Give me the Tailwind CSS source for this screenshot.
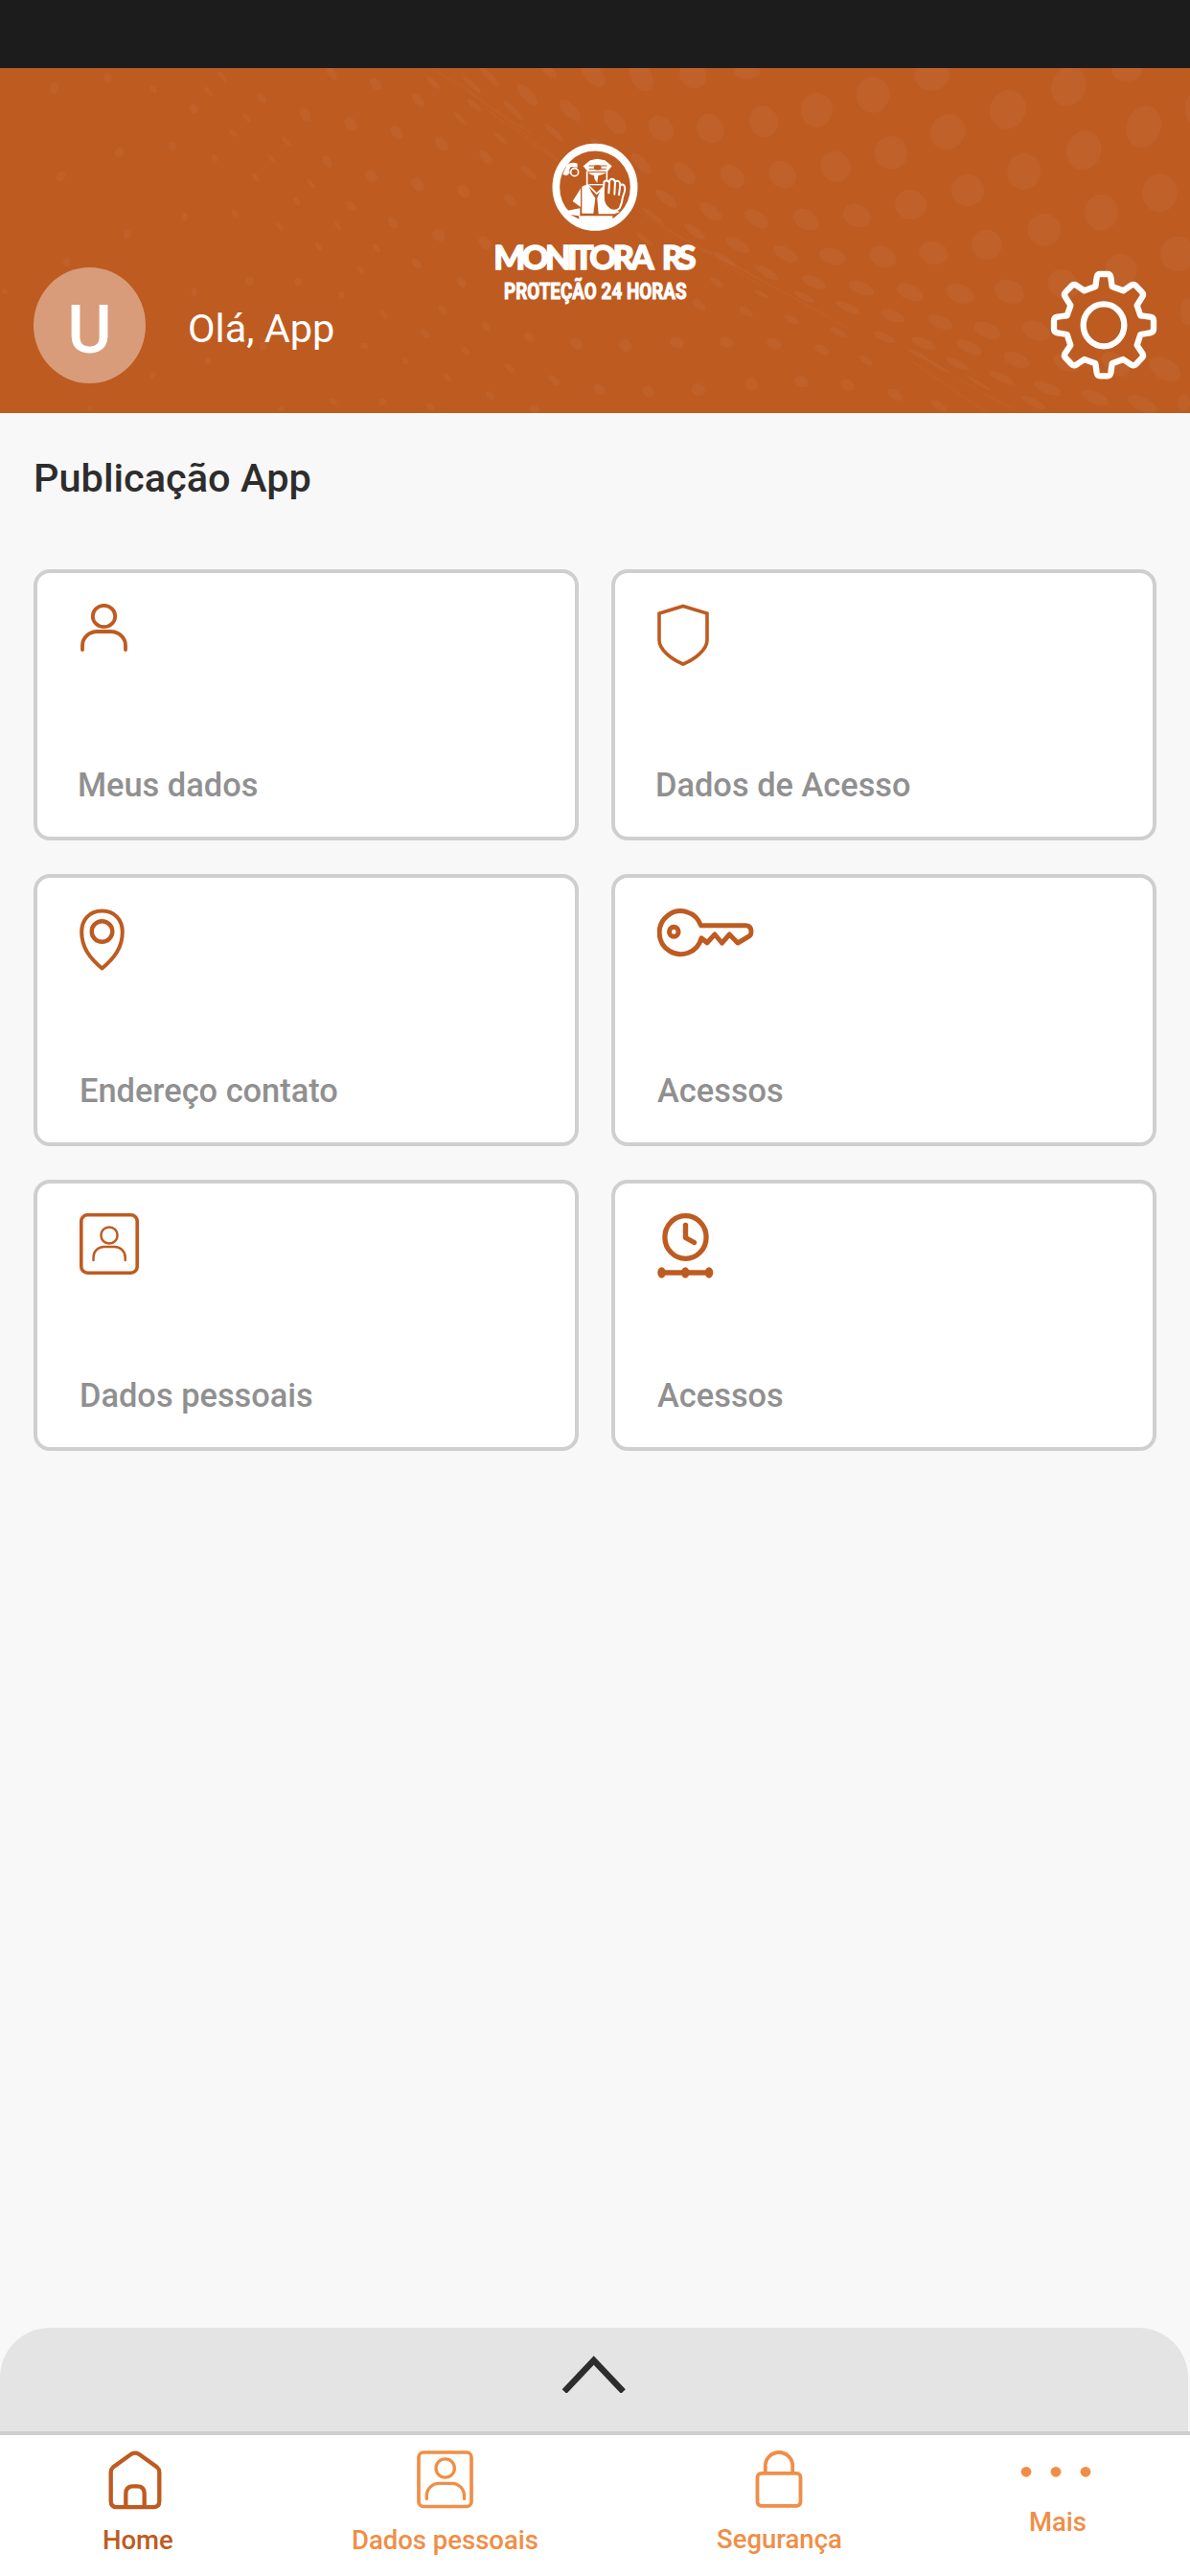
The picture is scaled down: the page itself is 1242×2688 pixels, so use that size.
<!doctype html>
<html lang="pt-BR">
<head>
  <meta charset="UTF-8">
  <meta name="viewport" content="width=device-width, initial-scale=1.0">
  <title>Monitora RS</title>
  <script src="https://cdn.jsdelivr.net/npm/@tailwindcss/browser@4"></script>
  <style>
    body { font-family: Roboto, 'Liberation Sans', sans-serif; }
  </style>
</head>
<body class="flex h-[2688px] w-[1242px] flex-col overflow-hidden bg-[#f8f8f8]">
  <div class="h-[71px] shrink-0 bg-[#1c1c1c]"></div>

  <header class="relative grid h-[360px] shrink-0 grid-cols-[1fr_240px_1fr] bg-[#be5b21] text-white">
    <!-- halftone background -->
    <svg class="absolute inset-0 h-full w-full" viewBox="0 63 1568 1080" preserveAspectRatio="none" fill="#c8906c" fill-opacity="0.11" id="halftone"></svg>

    <div class="relative flex items-center self-end pb-[31px] pl-[35px]">
      <div class="flex h-[121px] w-[117px] items-center justify-center rounded-[50%] bg-[#d89c7a] pt-2 text-[71px] leading-none font-medium">U</div>
      <p class="ml-[44px] pt-[6px] text-[41.5px] leading-[50px]">Olá, App</p>
    </div>

    <svg class="relative mt-[59px] h-[200px] w-[240px]" viewBox="3 0 720 600" fill="#fff">
      <ellipse cx="363" cy="196" rx="122" ry="125" fill="none" stroke="#fff" stroke-width="23"/>
      <path d="M262 272L316 262V284H418V296L462 268A118 118 0 0 1 264 268Z"/>
      <path d="M286 282L312 286L314 296Z" fill="#be5b21"/>
      <!-- camera -->
      <path d="M262 156L276 124Q292 116 308 122V134L288 132Q280 140 284 152L274 160Z"/>
      <circle cx="299" cy="149" r="12" fill="#be5b21" stroke="#fff" stroke-width="5"/>
      <!-- guard -->
      <path d="M326 130L348 112L370 107L394 112L416 130L402 147H340Z"/>
      <path d="M344 129H400M344 139H398" stroke="#be5b21" stroke-width="3"/>
      <ellipse cx="371" cy="135" rx="12" ry="8" fill="#be5b21"/>
      <path d="M338 146V186L352 200L368 216L386 200L400 182V146" fill="none" stroke="#fff" stroke-width="5"/>
      <path d="M342 150H398Q386 158 373 160L370 182L362 172L360 160Q348 158 342 150Z"/>
      <path d="M344 188H392" stroke="#fff" stroke-width="4"/>
      <path d="M322 194L340 186L352 212L364 230L358 278H322ZM318 200V258L293 240Z"/>
      <path d="M370 230L384 196L396 202L398 240L440 274L424 280H374Z"/>
      <path d="M391 186Q390 178 396 176Q404 174 408 182Q408 170 416 170Q424 170 426 180Q430 174 438 178Q442 182 442 190Q450 184 455 192Q460 204 450 226Q448 246 440 262Q428 274 410 266Q394 256 390 238Q388 210 391 186Z" fill="#be5b21" stroke="#fff" stroke-width="6"/>
      <path d="M408 182L406 214M426 180L424 218M442 190L438 220" stroke="#fff" stroke-width="6" stroke-linecap="round"/>
      <path d="M316 284H418" stroke="#be5b21" stroke-width="4"/>
      <g font-family="Lato, sans-serif" font-weight="900" font-size="104" stroke="#fff" stroke-width="4">
        <text x="46" y="452" textLength="502" lengthAdjust="spacing">MONITORA</text>
        <text x="572" y="452" textLength="108" lengthAdjust="spacing">RS</text>
      </g>
      <text x="78" y="546" font-family="Roboto, sans-serif" font-weight="700" font-size="72" textLength="572" lengthAdjust="spacingAndGlyphs" stroke="#fff" stroke-width="3">PROTEÇÃO 24 HORAS</text>
    </svg>

    <svg class="relative mr-[30px] mb-8 h-[120px] w-[120px] self-end justify-self-end" viewBox="37 58 360 360" fill="none" stroke="#fff" stroke-width="19" stroke-linejoin="round">
      <ellipse cx="217" cy="239" rx="64" ry="66"/>
      <path d="M191 118L195 89Q197 79 205 79H229Q237 79 239 89L243 118L278 131L303 114Q311 109 318 116L336 135Q343 142 338 150L321 177L332 209L362 213Q373 215 373 225V251Q373 261 362 263L332 268L321 302L338 327Q343 335 336 342L318 361Q311 368 303 363L278 346L243 359L239 388Q237 398 229 398H205Q197 398 195 388L191 359L156 346L131 363Q123 368 116 361L98 342Q91 335 96 327L113 302L102 268L72 263Q61 261 61 251V225Q61 215 72 213L102 209L113 177L96 150Q91 142 98 135L116 116Q123 109 131 114L156 131Z"/>
    </svg>
  </header>

  <main class="grow px-[35px] pt-[43px]">
    <h1 class="text-[41.5px] leading-[50px] font-medium text-[#2d2d2d]">Publicação App</h1>

    <div class="mt-[70px] grid grid-cols-2 gap-x-[34px] gap-y-[35px] text-[34.4px] leading-10 font-medium text-[#909090]">
      <div class="flex h-[283.3px] flex-col justify-between rounded-[17px] border-4 border-[#cfcfcf] bg-white pt-8 pb-[34px] pl-[42px]">
        <svg class="ml-[3px] h-[50px] w-[50px]" viewBox="0 0 50 50" fill="none" stroke="#be5b21" stroke-width="3.8" stroke-linecap="round">
          <ellipse cx="24.5" cy="13" rx="11.7" ry="11.2"/>
          <path d="M2 48V43.500A15.500 14.500 0 0 1 17.500 29H31.500A15.500 14.500 0 0 1 47 43.500V48"/>
        </svg>
        <p>Meus dados</p>
      </div>
      <div class="flex h-[283.3px] flex-col justify-between rounded-[17px] border-4 border-[#cfcfcf] bg-white pt-8 pb-[34px] pl-[42px]">
        <svg class="ml-px h-[65px] w-[56px]" viewBox="0 0 56 65" fill="none" stroke="#be5b21" stroke-width="3.6">
          <path d="M28 2.500L53 10V38C53 48 40 58 28 63C16 58 3 48 3 38V10Z"/>
        </svg>
        <p>Dados de Acesso</p>
      </div>
      <div class="flex h-[283.3px] flex-col justify-between rounded-[17px] border-4 border-[#cfcfcf] bg-white pt-8 pb-[34px] pl-[44px]">
        <svg class="h-[65px] w-[47px]" viewBox="0 0 47 65" fill="none" stroke="#be5b21" stroke-width="4" stroke-linejoin="round">
          <path d="M23.500 2.500C10 2.500 2.200 12 2.200 24.500C2.200 41 11 52 23.500 62.500C36 52 44.800 41 44.800 24.500C44.800 12 37 2.500 23.500 2.500Z"/>
          <circle cx="23.500" cy="24" r="10.800" stroke-width="4.400"/>
        </svg>
        <p>Endereço contato</p>
      </div>
      <div class="flex h-[283.3px] flex-col justify-between rounded-[17px] border-4 border-[#cfcfcf] bg-white pt-[31px] pb-[34px] pl-[44px]">
        <svg class="h-[52px] w-[102px]" viewBox="0 0 102 52" fill="none" stroke="#be5b21" stroke-width="5" stroke-linejoin="round">
          <path d="M46 32A22.300 22.500 0 1 1 45.500 18.700H92.500Q98 19 98 25Q98 28 96.500 29.500L84 37L75.300 28L67.500 37L60 28L52 36.800Z"/>
          <path d="M45.500 31.800L52 36.500"/>
          <ellipse cx="17.300" cy="25.200" rx="4.800" ry="5"/>
        </svg>
        <p>Acessos</p>
      </div>
      <div class="flex h-[283.3px] flex-col justify-between rounded-[17px] border-4 border-[#cfcfcf] bg-white pt-[31px] pb-[34px] pl-[44px]">
        <svg class="h-[64px] w-[62px]" viewBox="0 0 62 64" fill="none" stroke="#be5b21" stroke-linecap="round">
          <rect x="1.800" y="1.800" width="58.400" height="60.400" rx="6.500" stroke-width="3.600"/>
          <g stroke-width="2.500">
            <circle cx="31" cy="23" r="8.600"/>
            <path d="M14.500 49V46A11 11 0 0 1 25.500 35H36.500A11 11 0 0 1 47.700 46V49"/>
          </g>
        </svg>
        <p>Dados pessoais</p>
      </div>
      <div class="flex h-[283.3px] flex-col justify-between rounded-[17px] border-4 border-[#cfcfcf] bg-white pt-[31px] pb-[34px] pl-[44px]">
        <svg class="h-[69px] w-[60px]" viewBox="0 0 60 69" fill="none" stroke="#be5b21" stroke-linecap="round" stroke-linejoin="round">
          <ellipse cx="29.500" cy="25" rx="21.600" ry="22.300" stroke-width="5.300"/>
          <path d="M29.500 12.500V25.500L38.500 30.500M5 62H54" stroke-width="5.400"/>
          <g fill="#be5b21" stroke="none">
            <ellipse cx="4.600" cy="62" rx="4.300" ry="5.700"/>
            <ellipse cx="29.300" cy="62" rx="4.300" ry="5.700"/>
            <ellipse cx="54" cy="62" rx="4.300" ry="5.700"/>
          </g>
        </svg>
        <p>Acessos</p>
      </div>
    </div>
  </main>

  <div class="flex h-[108px] w-[1240px] shrink-0 justify-center rounded-t-[52px] bg-[#e4e4e4] pt-[28px]">
    <svg class="h-10 w-[70px]" viewBox="0 0 70 40" fill="none" stroke="#2d2d2d" stroke-width="6.500">
      <path d="M4 38.500L34.700 6L65.500 38.500"/>
    </svg>
  </div>

  <nav class="flex h-[151px] shrink-0 items-start justify-between border-t-4 border-[#cecece] bg-white pt-4 pr-[103px] pl-[107px] text-[27.5px] leading-8 font-medium text-[#f08e48]">
    <a class="flex flex-col items-center gap-4 text-[#be5b21]">
      <svg class="mr-[5px] h-[62px] w-[56px]" viewBox="0 0 56 62" fill="none" stroke="currentColor" stroke-width="4.300">
        <path d="M2.700 22.500Q2.700 19.500 5 17.500L24 3.800Q28 1.500 32 3.800L51 17.500Q53.300 19.500 53.300 22.500V53Q53.300 59.200 47 59.200H9Q2.700 59.200 2.700 53Z"/>
        <path d="M18.300 59V45Q18.300 37.300 26 37.300H30Q37.700 37.300 37.700 45V59"/>
      </svg>
      <span>Home</span>
    </a>
    <a class="flex flex-col items-center gap-4">
      <svg class="h-[62px] w-[59px]" viewBox="0 0 59 62" fill="none" stroke="currentColor" stroke-linecap="round">
        <rect x="2" y="2" width="55" height="56.500" rx="5" stroke-width="3.700"/>
        <g stroke-width="3.300">
          <circle cx="29.700" cy="18.500" r="9.700"/>
          <path d="M10.300 50.500V47.500A13 13 0 0 1 23.300 34.300H36.500A13 13 0 0 1 49.500 47.500V50.500"/>
        </g>
      </svg>
      <span>Dados pessoais</span>
    </a>
    <a class="flex flex-col items-center gap-[15px]">
      <svg class="h-[62px] w-[50px]" viewBox="0 0 50 62" fill="none" stroke="currentColor" stroke-width="3.800">
        <rect x="2.500" y="23.800" width="45" height="34" rx="4"/>
        <path d="M10.800 24V16A14.200 14 0 0 1 39.200 16V24"/>
      </svg>
      <span>Segurança</span>
    </a>
    <a class="flex flex-col items-center gap-[17px]">
      <svg class="h-[42px] w-[74px]" viewBox="0 0 74 42" fill="currentColor">
        <circle cx="6" cy="22.300" r="5.400"/>
        <circle cx="37" cy="22.300" r="5.400"/>
        <circle cx="68" cy="22.300" r="5.400"/>
      </svg>
      <span class="ml-1">Mais</span>
    </a>
  </nav>

  <script>
    // cx, cy, rx, ry, tilt
    const dots = [
      [1408,120,23,62,3],[1485,72,20,32,0],[1228,85,23,50,2],[1150,147,22,57,0],[1076,194,21,54,0],[1006,230,19,50,-2],[936,252,18,45,-4],[871,252,16,41,-7],[810,232,13,39,-12],[751,195,10,35,-17],[695,147,9,35,-17],[645,90,6,32,-20],
      [1568,190,7,40,0],[984,75,18,22,0],[913,85,18,42,-4],[845,90,15,46,-8],[781,80,13,44,-14],[724,75,8,22,-18],
      [1328,193,24,61,2],[1249,263,23,56,2],[1174,328,22,52,0],[1101,372,20,48,-2],[1031,397,18,43,-5],[965,402,15,38,-9],[902,392,12,36,-14],[845,362,9,34,-18],[790,310,7,30,-20],[730,265,6,30,-22],[676,195,5,32,-22],[622,115,5,30,-22],
      [1507,247,23,66,3],[1428,320,23,62,2],[1349,387,22,57,0],[1275,446,22,49,0],[1200,491,21,47,-2],[1129,525,18,37,-6],[1062,537,16,35,-12],[997,535,13,32,-18],[936,512,11,31,-20],[878,472,9,31,-22],
      [1528,454,23,60,0],[1451,515,22,57,0],[1376,570,22,50,0],[1300,616,20,47,0],[1230,642,19,37,-5],[1163,653,17,35,-10],[1097,653,16,28,-18],[1035,645,12,29,-24],[972,617,11,28,-26],[915,575,8,28,-26],[860,525,5,28,-28],
      [1552,645,23,55,0],[1477,695,21,50,0],[1401,740,20,47,-4],[1330,763,19,39,-8],[1265,769,17,33,-14],[1199,765,15,30,-20],[1135,752,13,26,-28],[1072,733,12,24,-30],[1010,703,9,26,-30],[955,660,6,26,-32],
      [1565,825,10,42,0],[1365,885,17,33,-14],[1301,885,15,30,-20],[1239,858,13,26,-26],[1176,838,12,24,-30],[1117,812,9,24,-34],[1060,780,7,22,-34],[1003,770,5,16,-34],
      [1535,1005,18,40,-16],[1470,990,16,40,-14],[1405,985,15,30,-18],[1340,977,14,28,-24],[1277,937,12,28,-30],[1217,925,11,24,-34],[1165,905,9,22,-34],[1105,890,7,18,-30],[1043,850,7,17,-28],[983,825,7,17,-24],[921,803,7,19,-18],
      [1505,1115,14,32,-28],[1443,1095,13,28,-30],[1380,1065,12,28,-34],[1320,1033,9,26,-34],[1262,990,8,24,-34],[1210,960,5,22,-36],[1362,1110,8,26,-34],[1235,995,4,28,-34],[1290,1050,4,28,-34],[1560,1110,8,28,0],
      [698,905,7,16,-8],[760,925,8,19,-8],[824,932,8,20,-4],[892,922,9,18,-4],[957,922,9,18,-8],[1020,926,9,18,-12],[1083,945,8,18,-20],[1141,978,6,18,-24],
      [671,1002,5,16,-18],[730,1040,6,17,-16],[790,1068,7,17,-10],[854,1075,8,17,-6],[920,1070,9,20,-2],[990,1053,9,20,-2],[1056,1045,9,19,-8],[1117,1055,9,19,-10],[1179,1085,8,20,-20],[1237,1120,7,20,-24],
      [437,80,6,20,-12],[495,114,7,20,-12],[551,164,7,22,-14],[571,108,5,22,-20],[606,220,4,22,-20],[625,180,5,22,-22],[582,300,8,22,-12],[640,342,7,22,-14],[660,283,4,20,-24],[523,264,8,22,-10],[462,238,8,22,-8],[402,208,7,22,-8],[345,157,5,18,-12],[293,90,4,18,-14],[202,130,4,12,-14],[142,94,5,16,0],[71,125,6,18,4],[275,138,4,16,-16],[255,190,6,16,-6],
      [325,218,4,16,-16],[307,267,4,12,-12],[377,292,4,16,-18],[431,356,6,20,-10],[489,401,8,20,-8],[550,428,8,22,-6],[611,449,8,21,-8],[672,477,7,20,-14],[697,390,6,24,-22],[227,308,5,14,0],[157,327,6,16,4],[283,344,4,12,-8],[358,347,3,14,-16],[337,406,4,14,-12],[410,425,3,14,-20],[463,494,6,16,-14],[518,547,6,20,-10],[578,586,8,20,-8],[639,610,8,22,-8],[80,402,6,16,6],
      [391,480,4,14,-12],[309,517,4,14,-6],[243,530,4,15,2],[168,584,5,15,2],[368,560,4,14,-16],[445,558,3,15,-14],[420,623,4,14,-12],[496,626,4,14,-16],[549,675,6,17,-12],[608,733,6,17,-8],[475,694,4,13,-12],[88,670,5,14,2],[6,762,4,10,0],[329,730,6,14,0],[393,733,5,13,0],[256,765,4,14,2],[450,773,4,12,0],[506,835,4,15,-10],[583,820,5,16,-12],[640,870,5,15,-10],[347,935,5,14,0],[274,980,4,12,0],[201,1025,4,9,8],[480,933,5,10,0],[534,980,4,12,-8],[560,893,5,16,-12],[614,950,5,14,-12],[590,1032,4,13,-16],[646,1088,5,14,-12],[439,1108,5,10,-14],[504,1108,5,12,0],[567,1123,5,12,-18],[704,1130,6,14,-12],[370,1130,4,8,0],[118,1127,3,6,0],[945,735,6,18,-26],[850,600,5,22,-26]
    ];
    document.getElementById('halftone').innerHTML = dots.map(([x, y, rx, ry, a]) =>
      `<ellipse cx="${x}" cy="${y}" rx="${rx}" ry="${ry}" transform="rotate(${a} ${x} ${y})"/>`
    ).join('') + '<path fill="none" stroke="#fff" stroke-opacity="0.04" stroke-width="2" d="M575 70L700 270M600 100L735 350M640 190L760 400M840 510L1000 740M870 560L1060 800M930 630L1120 880M1200 980L1300 1140M1260 1030L1340 1140"/>';
  </script>
</body>
</html>
